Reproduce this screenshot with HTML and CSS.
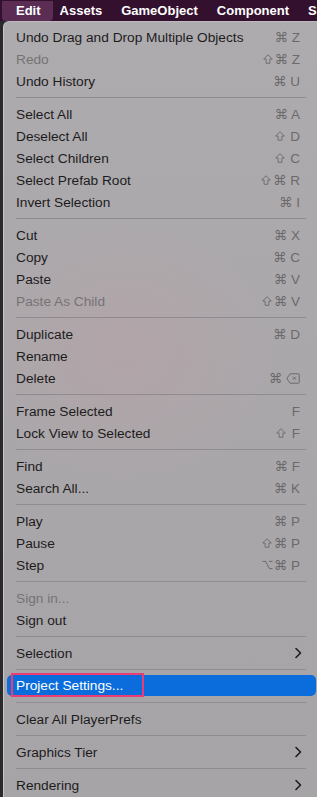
FILE: index.html
```html
<!DOCTYPE html>
<html>
<head>
<meta charset="utf-8">
<link rel="stylesheet" href="styles.css">
</head>
<body>
<div class="menubar">
  <span class="mb-item active">Edit</span>
  <span class="mb-item">Assets</span>
  <span class="mb-item">GameObject</span>
  <span class="mb-item">Component</span>
  <span class="mb-item">S</span>
</div>
<div class="menu">
  <div class="row"><span class="label">Undo Drag and Drop Multiple Objects</span><span class="sc">⌘ Z</span></div>
  <div class="row dis"><span class="label">Redo</span><span class="sc"><svg class="shift" viewBox="0 0 11 11"><path d="M5.5 0.8 L10.2 5.6 L7.6 5.6 L7.6 10.2 L3.4 10.2 L3.4 5.6 L0.8 5.6 Z"/></svg>⌘ Z</span></div>
  <div class="row"><span class="label">Undo History</span><span class="sc">⌘ U</span></div>
  <div class="sep"></div>
  <div class="row"><span class="label">Select All</span><span class="sc">⌘ A</span></div>
  <div class="row"><span class="label">Deselect All</span><span class="sc"><svg class="shift" viewBox="0 0 11 11"><path d="M5.5 0.8 L10.2 5.6 L7.6 5.6 L7.6 10.2 L3.4 10.2 L3.4 5.6 L0.8 5.6 Z"/></svg> D</span></div>
  <div class="row"><span class="label">Select Children</span><span class="sc"><svg class="shift" viewBox="0 0 11 11"><path d="M5.5 0.8 L10.2 5.6 L7.6 5.6 L7.6 10.2 L3.4 10.2 L3.4 5.6 L0.8 5.6 Z"/></svg> C</span></div>
  <div class="row"><span class="label">Select Prefab Root</span><span class="sc"><svg class="shift" viewBox="0 0 11 11"><path d="M5.5 0.8 L10.2 5.6 L7.6 5.6 L7.6 10.2 L3.4 10.2 L3.4 5.6 L0.8 5.6 Z"/></svg>⌘ R</span></div>
  <div class="row"><span class="label">Invert Selection</span><span class="sc">⌘ I</span></div>
  <div class="sep"></div>
  <div class="row"><span class="label">Cut</span><span class="sc">⌘ X</span></div>
  <div class="row"><span class="label">Copy</span><span class="sc">⌘ C</span></div>
  <div class="row"><span class="label">Paste</span><span class="sc">⌘ V</span></div>
  <div class="row dis"><span class="label">Paste As Child</span><span class="sc"><svg class="shift" viewBox="0 0 11 11"><path d="M5.5 0.8 L10.2 5.6 L7.6 5.6 L7.6 10.2 L3.4 10.2 L3.4 5.6 L0.8 5.6 Z"/></svg>⌘ V</span></div>
  <div class="sep"></div>
  <div class="row"><span class="label">Duplicate</span><span class="sc">⌘ D</span></div>
  <div class="row"><span class="label">Rename</span><span class="sc"></span></div>
  <div class="row"><span class="label">Delete</span><span class="sc">⌘ <svg class="del" viewBox="0 0 14 11"><path d="M4.2 0.8 L12.6 0.8 Q13.2 0.8 13.2 1.4 L13.2 9.6 Q13.2 10.2 12.6 10.2 L4.2 10.2 L0.8 5.5 Z"/><path d="M6.8 3.6 L10 6.8 M10 3.6 L6.8 6.8"/></svg></span></div>
  <div class="sep"></div>
  <div class="row"><span class="label">Frame Selected</span><span class="sc">F</span></div>
  <div class="row"><span class="label">Lock View to Selected</span><span class="sc"><svg class="shift" viewBox="0 0 11 11"><path d="M5.5 0.8 L10.2 5.6 L7.6 5.6 L7.6 10.2 L3.4 10.2 L3.4 5.6 L0.8 5.6 Z"/></svg> F</span></div>
  <div class="sep"></div>
  <div class="row"><span class="label">Find</span><span class="sc">⌘ F</span></div>
  <div class="row"><span class="label">Search All...</span><span class="sc">⌘ K</span></div>
  <div class="sep"></div>
  <div class="row"><span class="label">Play</span><span class="sc">⌘ P</span></div>
  <div class="row"><span class="label">Pause</span><span class="sc"><svg class="shift" viewBox="0 0 11 11"><path d="M5.5 0.8 L10.2 5.6 L7.6 5.6 L7.6 10.2 L3.4 10.2 L3.4 5.6 L0.8 5.6 Z"/></svg>⌘ P</span></div>
  <div class="row"><span class="label">Step</span><span class="sc"><svg class="opt" viewBox="0 0 12 11"><path d="M0.5 1.5 L3.8 1.5 L8.2 9.5 L11.5 9.5 M7.5 1.5 L11.5 1.5"/></svg>⌘ P</span></div>
  <div class="sep"></div>
  <div class="row dis"><span class="label">Sign in...</span><span class="sc"></span></div>
  <div class="row"><span class="label">Sign out</span><span class="sc"></span></div>
  <div class="sep"></div>
  <div class="row"><span class="label">Selection</span><span class="chev"><svg width="8" height="12" viewBox="0 0 8 12"><path d="M2 1.5 L6.5 6 L2 10.5"/></svg></span></div>
  <div class="sep"></div>
  <div class="row hl"><span class="label">Project Settings...</span><span class="mark"></span></div>
  <div class="sep"></div>
  <div class="row"><span class="label">Clear All PlayerPrefs</span></div>
  <div class="sep"></div>
  <div class="row"><span class="label">Graphics Tier</span><span class="chev"><svg width="8" height="12" viewBox="0 0 8 12"><path d="M2 1.5 L6.5 6 L2 10.5"/></svg></span></div>
  <div class="sep"></div>
  <div class="row"><span class="label">Rendering</span><span class="chev"><svg width="8" height="12" viewBox="0 0 8 12"><path d="M2 1.5 L6.5 6 L2 10.5"/></svg></span></div>
</div>
</body>
</html>
```
FILE: styles.css
```css
html, body {
  margin: 0;
  padding: 0;
  width: 317px;
  height: 797px;
  overflow: hidden;
  background: #2a2a2c;
  font-family: "Liberation Sans", Arial, sans-serif;
}
.menubar {
  height: 21px;
  background: #34102f;
  display: flex;
  align-items: center;
  padding-left: 2px;
  box-sizing: border-box;
  white-space: nowrap;
}
.mb-item {
  color: #ffffff;
  font-weight: bold;
  font-size: 13px;
  height: 20px;
  line-height: 20px;
  margin-right: 19px;
  flex: none;
}
.mb-item.active {
  background: #5b2d55;
  border-radius: 0 0 4px 4px;
  padding: 0 12px 0 14px;
  margin-right: 7px;
}
.menu {
  margin-left: 3px;
  width: 320px;
  height: 776px;
  box-sizing: border-box;
  padding-top: 4px;
  border-left: 1px solid #c9c6c8;
  border-top: 1px solid #bdb9bc;
  border-radius: 6px 0 0 0;
  background:
    radial-gradient(ellipse 150px 130px at 120px 330px, rgba(190, 160, 166, 0.4), rgba(190, 160, 166, 0) 100%),
    linear-gradient(180deg, #aeabae 0%, #aaa7aa 50%, #a7a4a7 100%);
}
.row {
  position: relative;
  height: 22px;
  margin: 0 3px;
  padding: 0 16px 0 9px;
  display: flex;
  align-items: center;
  justify-content: space-between;
  font-size: 13.7px;
  color: #1d1c1d;
  width: 309px;
  box-sizing: border-box;
  white-space: nowrap;
}
.row.dis { color: #767375; }
.sc {
  display: flex;
  align-items: center;
  color: #6c696b;
  font-family: "Liberation Sans", "DejaVu Sans", sans-serif;
  font-size: 13.5px;
  white-space: pre;
}
.shift {
  width: 10px;
  height: 10px;
  margin-right: 2px;
  fill: none;
  stroke: #6c696b;
  stroke-width: 1;
  stroke-linejoin: round;
}
.opt {
  width: 11px;
  height: 10px;
  margin-right: 1px;
  fill: none;
  stroke: #6c696b;
  stroke-width: 1.1;
}
.del {
  width: 14px;
  height: 11px;
  fill: none;
  stroke: #6c696b;
  stroke-width: 1;
  stroke-linejoin: round;
}
.chev {
  display: flex;
  align-items: center;
  margin-right: -2px;
}
.chev path {
  fill: none;
  stroke: #1e1e1e;
  stroke-width: 1.6;
  stroke-linecap: round;
  stroke-linejoin: round;
}
.row.hl {
  background: #0b6ddb;
  color: #ffffff;
  border-radius: 5px;
  height: 21px;
  margin-bottom: 1px;
}
.mark {
  position: absolute;
  left: 4px;
  top: -2px;
  width: 133px;
  height: 24px;
  box-sizing: border-box;
  border: 2px solid #ec3c74;
}
.sep {
  height: 11px;
  position: relative;
}
.sep::after {
  content: "";
  position: absolute;
  left: 12px;
  width: 290px;
  top: 5px;
  height: 1px;
  background: #8f8b8e;
}
```
